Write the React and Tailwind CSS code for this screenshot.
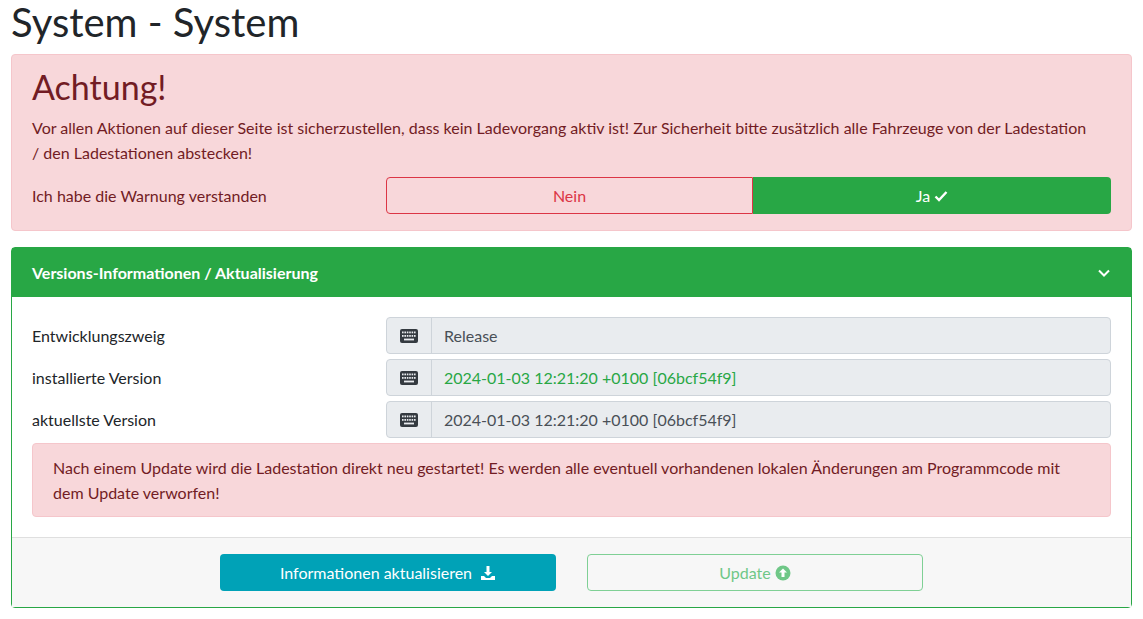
import React from "react";

const Keyboard = () => (
  <svg width="18" height="14" viewBox="0 0 18 14" fill="#343a40">
    <rect x="0" y="0" width="18" height="14" rx="2" />
    {[0, 1, 2, 3, 4, 5].map((i) => (
      <rect key={"a" + i} x={2 + i * 2.4} y="2.5" width="1.6" height="1.8" fill="#e9ecef" />
    ))}
    {[0, 1, 2, 3, 4, 5].map((i) => (
      <rect key={"b" + i} x={2 + i * 2.4} y="6" width="1.6" height="1.8" fill="#e9ecef" />
    ))}
    <rect x="4" y="9.6" width="10" height="1.8" fill="#e9ecef" />
  </svg>
);

const Row = ({ label, value, green }) => (
  <div className="flex items-center h-[37px] mb-[5px]">
    <div className="w-[354px] text-[#212529]">{label}</div>
    <div className="flex flex-1 h-full border border-[#ced4da] rounded bg-[#e9ecef]">
      <div className="w-[45px] flex items-center justify-center border-r border-[#ced4da]">
        <Keyboard />
      </div>
      <div className={"flex items-center px-3 " + (green ? "text-[#28a745]" : "text-[#495057]")}>{value}</div>
    </div>
  </div>
);

export default function App() {
  return (
    <div className="w-[1132px] pl-[11px] bg-white min-h-[619px] text-[16px]" style={{ fontFamily: "Lato, 'Noto Sans', sans-serif" }}>
      <h1 className="text-[40px] leading-[44px] text-[#212529] mb-[10px]">System - System</h1>

      <div className="bg-[#f8d7da] border border-[#f5c6cb] rounded text-[#721c24] px-5 pt-3 pb-4 mb-4">
        <h2 className="text-[34px] leading-[40px] mb-2">Achtung!</h2>
        <p className="text-[16px] leading-[25px] mb-3 pr-6">
          Vor allen Aktionen auf dieser Seite ist sicherzustellen, dass kein Ladevorgang aktiv ist! Zur Sicherheit bitte zusätzlich alle Fahrzeuge von der Ladestation / den Ladestationen abstecken!
        </p>
        <div className="flex items-center">
          <div className="w-[354px] text-[16px]">Ich habe die Warnung verstanden</div>
          <div className="flex flex-1 h-[37px] text-[16px]">
            <div className="w-[367px] flex items-center justify-center border border-[#dc3545] rounded-l text-[#dc3545]">Nein</div>
            <div className="flex-1 flex items-center justify-center bg-[#28a745] rounded-r text-white gap-1">
              Ja
              <svg width="14" height="12" viewBox="0 0 14 12"><path d="M1.5 6.5l3.5 3.5 7.5-8" fill="none" stroke="white" strokeWidth="2.4" /></svg>
            </div>
          </div>
        </div>
      </div>

      <div className="border border-[#28a745] rounded">
        <div className="bg-[#28a745] text-white font-bold text-[16px] h-[49px] flex items-center justify-between px-5">
          <span>Versions-Informationen / Aktualisierung</span>
          <svg width="14" height="10" viewBox="0 0 14 10"><path d="M2 2.5l5 5 5-5" fill="none" stroke="white" strokeWidth="2" /></svg>
        </div>
        <div className="px-5 pt-5 pb-5 text-[16px]">
          <Row label="Entwicklungszweig" value="Release" />
          <Row label="installierte Version" value="2024-01-03 12:21:20 +0100 [06bcf54f9]" green />
          <Row label="aktuellste Version" value="2024-01-03 12:21:20 +0100 [06bcf54f9]" />
          <div className="bg-[#f8d7da] border border-[#f5c6cb] rounded text-[#721c24] px-5 py-[11px] leading-[25px]">
            Nach einem Update wird die Ladestation direkt neu gestartet! Es werden alle eventuell vorhandenen lokalen Änderungen am Programmcode mit dem Update verworfen!
          </div>
        </div>
        <div className="bg-[#f7f7f7] border-t border-[#dfdfdf] flex justify-center gap-[31px] py-4 text-[16px]">
          <button className="w-[336px] h-[37px] bg-[#00a2b7] text-white rounded flex items-center justify-center gap-2">
            Informationen aktualisieren
            <svg width="16" height="16" viewBox="0 0 16 16" fill="white"><path d="M6.5 1h3v6h2.5L8 11 4 7h2.5z" /><path d="M1 11h3l2 2h4l2-2h3v4H1z" /></svg>
          </button>
          <button className="w-[336px] h-[37px] border border-[#7fd095] text-[#6fc787] rounded flex items-center justify-center gap-1">
            Update
            <svg width="16" height="16" viewBox="0 0 16 16"><circle cx="8" cy="8" r="7.5" fill="#6fc787" /><path d="M8 3.5L4 7.5h2.5V12h3V7.5H12z" fill="white" /></svg>
          </button>
        </div>
      </div>
    </div>
  );
}
